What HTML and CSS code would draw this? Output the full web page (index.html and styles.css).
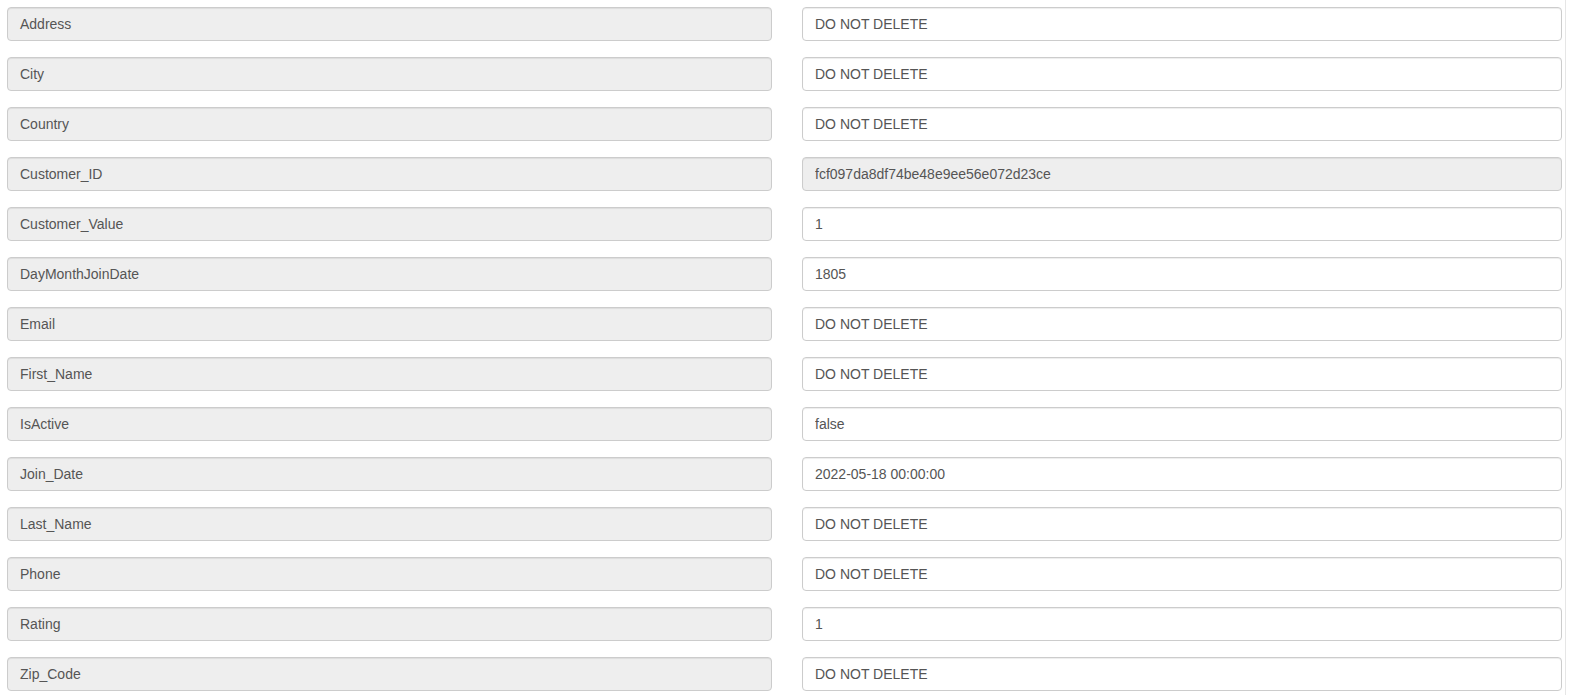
FILE: index.html
```html
<!DOCTYPE html>
<html>
<head>
<meta charset="utf-8">
<link rel="stylesheet" href="styles.css">
</head>
<body>
<div class="page">
  <form class="fields">
    <div class="row"><div class="label-box">Address</div><input class="input" value="DO NOT DELETE"></div>
    <div class="row"><div class="label-box">City</div><input class="input" value="DO NOT DELETE"></div>
    <div class="row"><div class="label-box">Country</div><input class="input" value="DO NOT DELETE"></div>
    <div class="row"><div class="label-box">Customer_ID</div><input class="input" value="fcf097da8df74be48e9ee56e072d23ce" disabled></div>
    <div class="row"><div class="label-box">Customer_Value</div><input class="input" value="1"></div>
    <div class="row"><div class="label-box">DayMonthJoinDate</div><input class="input" value="1805"></div>
    <div class="row"><div class="label-box">Email</div><input class="input" value="DO NOT DELETE"></div>
    <div class="row"><div class="label-box">First_Name</div><input class="input" value="DO NOT DELETE"></div>
    <div class="row"><div class="label-box">IsActive</div><input class="input" value="false"></div>
    <div class="row"><div class="label-box">Join_Date</div><input class="input" value="2022-05-18 00:00:00"></div>
    <div class="row"><div class="label-box">Last_Name</div><input class="input" value="DO NOT DELETE"></div>
    <div class="row"><div class="label-box">Phone</div><input class="input" value="DO NOT DELETE"></div>
    <div class="row"><div class="label-box">Rating</div><input class="input" value="1"></div>
    <div class="row"><div class="label-box">Zip_Code</div><input class="input" value="DO NOT DELETE"></div>
  </form>
</div>
</body>
</html>
```
FILE: styles.css
```css
html, body {
  margin: 0;
  padding: 0;
  background: #fff;
  overflow: hidden;
}
body {
  font-family: "Liberation Sans", Arial, sans-serif;
  font-size: 14px;
  color: #555;
}
.page {
  width: 1566px;
  height: 695px;
  border-right: 1px solid #e6e6e6;
  box-sizing: border-box;
  padding: 7px 0 0 7px;
}
.fields {
  display: flex;
  flex-direction: column;
  gap: 16px;
  margin: 0;
}
.row {
  display: grid;
  grid-template-columns: 765px 760px;
  column-gap: 30px;
}
.label-box, .input {
  height: 34px;
  box-sizing: border-box;
  border: 1px solid #ccc;
  border-radius: 4px;
  padding: 6px 12px;
  font-family: "Liberation Sans", Arial, sans-serif;
  font-size: 14px;
  line-height: 20px;
  color: #555;
  box-shadow: inset 0 1px 1px rgba(0,0,0,0.075);
}
.label-box {
  background: #eee;
}
.input {
  background: #fff;
  width: 100%;
  margin: 0;
  outline: none;
}
.input:disabled {
  background: #eee;
  color: #555;
  -webkit-text-fill-color: #555;
  opacity: 1;
}
```
